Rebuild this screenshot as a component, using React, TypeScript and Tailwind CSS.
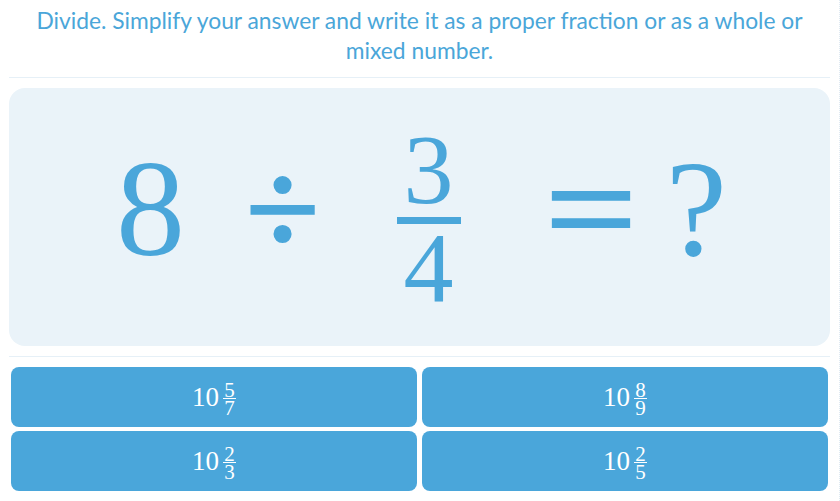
const serif = { fontFamily: '"Liberation Serif", "Times New Roman", serif' };
const sans = { fontFamily: 'Lato, "Open Sans", sans-serif' };

type Choice = { whole: string; num: string; den: string };

const choices: Choice[] = [
  { whole: "10", num: "5", den: "7" },
  { whole: "10", num: "8", den: "9" },
  { whole: "10", num: "2", den: "3" },
  { whole: "10", num: "2", den: "5" },
];

function MixedNumber({ whole, num, den }: Choice) {
  return (
    <span className="inline-flex items-center text-white" style={serif}>
      <span className="text-[27px] leading-none">{whole}</span>
      <span className="ml-[4px] mt-[6px] flex flex-col items-center text-[21px]">
        <span className="leading-[15px]">{num}</span>
        <span className="h-px w-[13px] bg-white" />
        <span className="leading-[19px]">{den}</span>
      </span>
    </span>
  );
}

export default function App() {
  return (
    <div className="h-[501px] w-[840px] border-r border-dotted border-[#dfeaf3] bg-white">
      <div className="px-[9px] pt-[5px]">
        <p
          className="px-[20px] text-center text-[22.8px] leading-[30px] text-[#4aa6d9]"
          style={sans}
        >
          Divide. Simplify your answer and write it as a proper fraction or as a whole or mixed
          number.
        </p>

        <div className="mt-[12px] h-px bg-[#e6f0f7]" />

        <div
          className="mt-[10px] flex h-[258px] items-center justify-center rounded-[16px] bg-[#eaf3f9] pr-[2px] text-[#4aa6da]"
          style={serif}
        >
          <span className="mb-[17px] w-[100px] text-center text-[138px] leading-none">8</span>
          <span className="mb-[17px] ml-[32px] w-[100px] text-center text-[138px] font-bold leading-none">
            ÷
          </span>
          <span className="ml-[46px] flex w-[100px] flex-col items-center text-[100px]">
            <span className="leading-[94px]">3</span>
            <span className="h-[7px] w-[64px] bg-[#4aa6da]" />
            <span className="leading-[88px]">4</span>
          </span>
          <span className="mb-[17px] ml-[62px] w-[101px] scale-x-[1.22] text-center text-[138px] font-bold leading-none">
            =
          </span>
          <span className="mb-[17px] ml-[15px] w-[80px] text-center text-[138px] leading-none">
            ?
          </span>
        </div>

        <div className="mt-[10px] h-px bg-[#e6f0f7]" />

        <div className="mx-[2px] mt-[10px] grid grid-cols-2 gap-x-[5px] gap-y-[4px]">
          {choices.map((c, i) => (
            <button
              key={i}
              type="button"
              className="flex h-[60px] items-center justify-center rounded-[8px] bg-[#4aa6da]"
            >
              <MixedNumber {...c} />
            </button>
          ))}
        </div>
      </div>
    </div>
  );
}
